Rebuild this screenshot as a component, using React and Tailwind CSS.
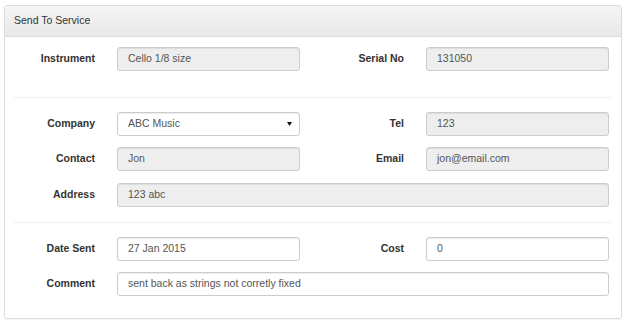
import React from "react";

const font = { fontFamily: '"Liberation Sans", Arial, sans-serif' };

const Field = ({ value, disabled, select, wide }) => (
  <div
    className={`flex items-center justify-between h-[24px] ${
      wide ? "w-[492px]" : "w-[183px]"
    } ml-[22px] pl-[10px] pr-[6px] border border-[#cccccc] rounded-[3px] shadow-[inset_0_1px_1px_rgba(0,0,0,0.075)] text-[10.5px] text-[#555555] ${
      disabled ? "bg-[#eeeeee]" : "bg-white"
    }`}
  >
    <span>{value}</span>
    {select && (
      <svg width="5" height="4" viewBox="0 0 5 4" className="mr-[1px]">
        <path d="M0 0 L5 0 L2.5 4 Z" fill="#111" />
      </svg>
    )}
  </div>
);

const Label = ({ children, right }) => (
  <div
    className={`${
      right ? "w-[104px]" : "w-[81px]"
    } text-right text-[10.5px] font-bold text-[#333333]`}
  >
    {children}
  </div>
);

const Row = ({ className = "", children }) => (
  <div className={`flex items-center ${className}`}>{children}</div>
);

export default function App() {
  return (
    <div className="w-[627px] h-[327px] bg-white pt-[5px] pl-[4px]" style={font}>
      <div className="w-[618px] h-[314px] border border-[#dddddd] rounded-[3px] shadow-[0_1px_2px_rgba(0,0,0,0.05)] overflow-hidden">
        <div className="h-[31px] flex items-center pl-[9px] border-b border-[#dddddd] bg-gradient-to-b from-[#f5f5f5] to-[#e8e8e8] text-[10.5px] text-[#333333]">
          Send To Service
        </div>
        <div className="pl-[9px] pr-[10px] pt-[10px]">
          <Row>
            <Label>Instrument</Label>
            <Field value="Cello 1/8 size" disabled />
            <Label right>Serial No</Label>
            <Field value="131050" disabled />
          </Row>

          <div className="mt-[26px] border-t border-[#eeeeee]" />

          <Row className="mt-[14px]">
            <Label>Company</Label>
            <Field value="ABC Music" select />
            <Label right>Tel</Label>
            <Field value="123" disabled />
          </Row>
          <Row className="mt-[11px]">
            <Label>Contact</Label>
            <Field value="Jon" disabled />
            <Label right>Email</Label>
            <Field value="jon@email.com" disabled />
          </Row>
          <Row className="mt-[12px]">
            <Label>Address</Label>
            <Field value="123 abc" disabled wide />
          </Row>

          <div className="mt-[15px] border-t border-[#eeeeee]" />

          <Row className="mt-[14px]">
            <Label>Date Sent</Label>
            <Field value="27 Jan 2015" />
            <Label right>Cost</Label>
            <Field value="0" />
          </Row>
          <Row className="mt-[11px]">
            <Label>Comment</Label>
            <Field value="sent back as strings not corretly fixed" wide />
          </Row>
        </div>
      </div>
    </div>
  );
}
